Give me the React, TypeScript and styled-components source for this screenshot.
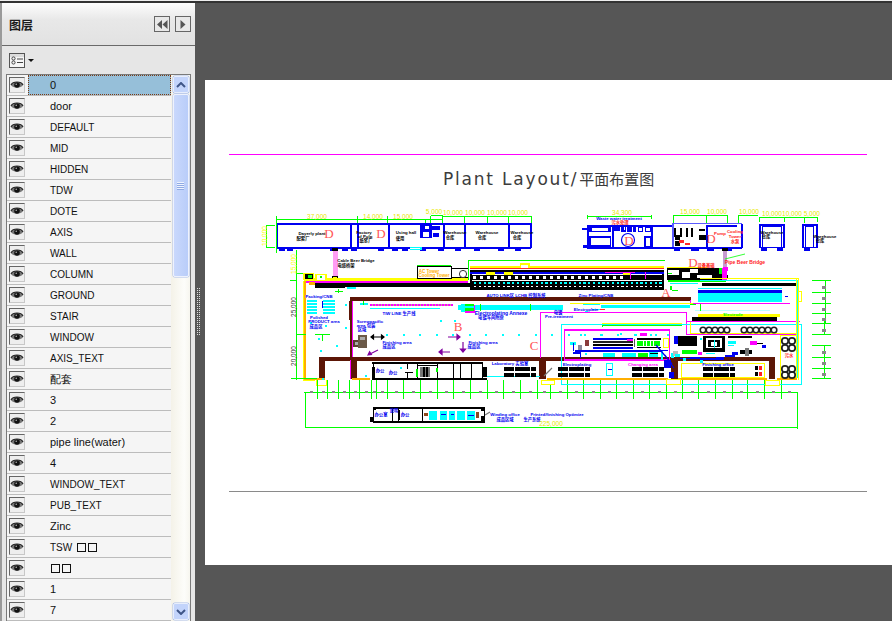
import React from "react";
import styled, { createGlobalStyle } from "styled-components";

const Global = createGlobalStyle`
  html, body { margin: 0; padding: 0; height: 621px; overflow: hidden; background: #565656; }
  #root { height: 621px; }
`;
const Shell = styled.div`
  width: 892px; height: 621px; overflow: hidden; box-sizing: border-box;
  border-top: 1px solid #eee;
  background: #565656; font-family: "Liberation Sans", Tahoma, sans-serif;
`;
const Workspace = styled.div`
  display: flex; height: 620px; box-sizing: border-box; border-top: 2px solid #333;
`;
const Sidebar = styled.aside`
  width: 195px; flex: none; box-sizing: border-box;
  display: flex; flex-direction: column;
  border-left: 2px solid #9a9a9a;
  background: #e6e6e6;
`;
const PanelHeader = styled.header`
  height: 43px; flex: none; display: flex; align-items: center; box-sizing: border-box;
  padding: 0 4px 0 7px; border-bottom: 1px solid #6a6a6a;
  background: linear-gradient(#fdfdfd, #e8e8e8 40%, #e2e2e2);
`;
const PanelTitle = styled.h1`
  margin: 0; flex: 1; font: bold 12px "Noto Sans CJK SC", sans-serif; color: #1c1c1c;
`;
const NavButton = styled.button`
  width: 16px; height: 16px; padding: 0; margin-left: ${p => p.$gap}px;
  display: flex; align-items: center; justify-content: center;
  border: 1px solid #666; background: #e8e8e8;
`;
const OptionsBar = styled.div`
  height: 28px; flex: none; display: flex; align-items: center; gap: 3px; padding-left: 7px;
`;
const OptionsIcon = styled.div`
  width: 16px; height: 15px; box-sizing: border-box; border: 1px solid #555;
  background: linear-gradient(#ddd 0 3px, #f6f6f6 3px); display: flex;
`;
const Caret = styled.span`
  width: 0; height: 0; border: 3px solid transparent; border-top-color: #111; border-bottom: 0;
`;
const ListFrame = styled.div`
  margin: 0 4px; flex: 1; min-height: 0; display: flex; box-sizing: border-box;
  border: 1px solid #7a7a7a; border-bottom: 0; background: #f5f5f5;
`;
const Rows = styled.ul`
  list-style: none; margin: 0; padding: 0; width: 164px; flex: none; overflow: hidden;
`;
const Row = styled.li`
  height: 21px; box-sizing: border-box; display: flex; align-items: stretch;
  border-bottom: 1px solid #bcbcbc; background: #f5f5f5;
`;
const EyeCell = styled.div`
  width: 21px; flex: none; display: flex; align-items: center; padding-left: 2px; box-sizing: border-box;
`;
const EyeBox = styled.div`
  width: 16px; height: 16px; box-sizing: border-box; display: flex; align-items: center; justify-content: center;
  border: 1px solid; border-color: #666 #c8c8c8 #c8c8c8 #666; background: #eee;
`;
const LayerName = styled.div`
  flex: 1; display: flex; align-items: center; padding-left: 22px; color: #111;
  font-size: ${p => (p.$caps ? 10 : 11)}px;
  ${p => p.$selected ? "background: #96bfd9; outline: 1px dotted #7a3b14; outline-offset: -1px;" : ""}
`;
const LayerPrefix = styled.span`
  margin-right: 4px; font-size: 10px;
`;
const Tofu = styled.span`
  display: inline-block; width: 9px; height: 9px; box-sizing: border-box; border: 1px solid #111; margin-left: 1px; margin-right: 1px;
`;
const Scrollbar = styled.div`
  width: 19px; flex: none; display: flex; flex-direction: column; align-items: center;
  background: linear-gradient(90deg, #f4f2e8, #fdfdfa 70%, #f7f6ef);
`;
const ScrollButton = styled.div`
  width: 16px; height: 17px; margin: 1px 0; flex: none; box-sizing: border-box; display: flex; align-items: center; justify-content: center;
  border: 1px solid #e8eefc; border-radius: 2px; background: #c3d4fb; box-shadow: 0 0 0 0.5px #a9bce6;
`;
const Thumb = styled.div`
  width: 16px; height: 183px; flex: none; box-sizing: border-box; display: flex; align-items: center; justify-content: center;
  border: 1px solid #eef2fd; border-radius: 2px; background: linear-gradient(90deg, #c9d8fc, #b9cdf9);
  box-shadow: 0 0 0 0.5px #a9bce6;
`;
const Grip = styled.div`
  width: 7px; height: 8px; background: repeating-linear-gradient(#eef3fe 0 1px, #8fa9e3 1px 2px);
`;
const Track = styled.div`flex: 1;`;
const Gutter = styled.div`
  width: 10px; flex: none; display: flex; align-items: center; padding-left: 2px; box-sizing: border-box;
  padding-bottom: 1px; background: #565656;
`;
const GripDots = styled.div`
  width: 3px; height: 48px;
  background-image: radial-gradient(circle at 0.5px 0.5px, #ddd 0.7px, transparent 0.8px);
  background-size: 2px 2px;
`;
const Canvas = styled.main`
  flex: 1; padding-top: 77px; display: flex; align-items: flex-start;
`;
const Page = styled.section`
  flex: 1; height: 485px; background: #fff; padding-top: 74px; box-sizing: border-box;
  display: flex; flex-direction: column;
`;
const Rule = styled.hr`
  margin: 0 25px 0 24px; border: 0; height: 1px; flex: none; background: ${p => p.$color};
`;
const Title = styled.div`
  height: 50px; padding-left: 238px; display: flex; align-items: center; box-sizing: border-box; padding-bottom: 3px;
  color: #3c3c3c; white-space: nowrap;
`;
const TitleLatin = styled.span`
  font: 17px "DejaVu Sans", sans-serif; letter-spacing: 1.8px; margin-right: 1px;
`;
const TitleCjk = styled.span`
  font: 15px "Noto Sans CJK SC", sans-serif;
`;
const Drawing = styled.svg`
  display: block; margin-left: 55px; width: 600px; height: 232px; flex: none; margin-bottom: 54px;
`;

type R = [number, number, number, number, string];
const BLUE = "#0000f0", GREEN = "#00ff00", YEL = "#ffff00", CY = "#00ffff", MAG = "#ff00ff", BRN = "#5c1606", BLK = "#000", ORG = "#ffae00", RED = "#ff2a2a";

const range = (n: number, f: (i: number) => number) => Array.from({ length: n }, (_, i) => f(i));

const fills: R[] = [
  /* left top building */
  [276,223,255,1.5,BLUE],[276,247,255,1.5,BLUE],[276,223,1.5,25,BLUE],[530,223,1.5,25,BLUE],
  ...[350,357,388,443,464,508].map((x): R => [x,223,1.5,25,BLUE]),
  ...[279,287,330,342,351,378,392,402,420,438,455,474,498,515].map((x): R => [x,248,6,3,BLUE]),
  [420,224,12,14,BLUE],[432,226,8,4,BLUE],[423,232,6,5,"#fff"],[425,226,4,3,"#fff"],[433,233,6,4,BLUE],
  [410,247,12,3,CY],[410,248,10,1,"#fff"],
  /* left top dims */
  [276,219,166,1,GREEN],[442,216,89,1,GREEN],[431,215,11,1,GREEN],[442,215,1,8,GREEN],[425,219,1,4,GREEN],
  ...[276,357,387,430,464,487,508,531].map((x): R => [x,216,1,7,GREEN]),
  [266,225,9,1,GREEN],[266,247,9,1,GREEN],[266,225,1,22,GREEN],[276,223,1,30,GREEN],
  /* bridge left */
  [333,249,5,27,"#ff9cf4"],[332,248,6,3,BLK],[332,276,6,4,BLK],[333,277,4,2,YEL],
  /* right top buildings */
  [587,225,85,1.5,BLUE],[587,247,85,1.5,BLUE],[587,225,2,23,BLUE],[589,226,22,6,BLUE],[589,236,22,11,BLUE],
  [592,228,16,3,"#fff"],[591,238,19,7,"#fff"],[612,226,1.5,22,BLUE],[613,226,7,5,BLUE],
  [621,226,5,6,BLUE],[627,226,5,6,BLUE],[638,226,5,6,BLUE],[645,226,6,6,BLUE],[633,226,3,6,BLUE],
  [624,227,1,3,"#fff"],[639,228,3,3,"#fff"],[646,228,4,3,"#fff"],[644,236,7,11,BLUE],[646,238,4,8,"#fff"],
  [651,225,1.5,23,BLUE],[582,228,5,2,BLUE],[583,245,4,3,BLUE],
  [587,216,65,1,GREEN],[587,215,1,4,GREEN],[651,215,1,4,GREEN],
  [672,223,70,1,"#5a5aff"],[672,223,1.5,26,"#5a5aff"],[706,225,1.5,24,BLUE],[706,225,31,1.5,BLUE],[706,247,36,1.5,BLUE],
  [672,247,34,1.5,BLUE],[674,248,6,3,BLUE],[691,248,8,3,BLUE],[707,248,7,3,BLUE],[726,248,6,3,BLUE],[741,224,1.5,24,BLUE],
  [674,228,2,9,BLK],[680,228,2,9,BLK],[686,228,2,9,BLK],[691,228,2,9,BLK],[675,235,5,5,BLK],[675,241,5,5,BLK],
  [699,229,6,2,BLK],[699,235,7,5,BLK],[679,240,5,3,RED],[685,243,5,2,RED],
  [673,215,54,1,GREEN],[673,215,1,8,GREEN],[706,215,1,8,GREEN],[727,215,1,8,GREEN],[738,215,20,1,GREEN],[738,215,1,8,GREEN],
  [759,217,25,1,GREEN],[784,217,18,1,GREEN],[802,217,15,1,GREEN],[759,217,1,5,GREEN],[784,217,1,5,GREEN],[804,217,1,6,GREEN],[817,217,1,5,GREEN],
  [759,224,25,1.5,BLUE],[759,224,1.5,24,BLUE],[783,224,1.5,24,BLUE],[762,226,20,1,BLUE],[762,226,1,21,BLUE],[781,226,1,21,BLUE],[759,247,25,1,BLUE],
  [761,248,6,3,BLUE],[777,248,6,3,BLUE],
  [802,224,15,1.5,BLUE],[802,224,1.5,24,BLUE],[816,224,1.5,24,BLUE],[805,226,9,1,BLUE],[805,226,1,21,BLUE],[813,226,1,21,BLUE],[802,247,15,1,BLUE],[804,248,6,3,BLUE],
  /* right bridge */
  [723,248,4,29,"#c79ad0"],[722,248,6,3,BLK],[723,267,5,4,MAG],[722,275,6,4,BLK],
  /* top plant strip */
  [304,278,164,3,YEL],[304,281,164,1.5,MAG],[345,282.500,125,4,BLK],[315,283,30,5,BLK],
  [296,273,8,1,GREEN],[303,273,11,7,YEL],[305,274,8,5,BLK],[308,275,4,3,GREEN],[315,274,12,7,YEL],[317,275,8,5,"#fff"],[320,276,2,2,GREEN],
  [309,282,6,3,ORG],[347,287,9,2,CY],[335,291,8,1,GREEN],[338,289,1,4,GREEN],
  [417,265,34,1,GREEN],[417,266,1,13,BLK],[417,266,34,1,BLK],[417,278,34,1,BLK],[451,266,1,13,BLK],[451,268,17,1,BLK],[451,277,17,1,BLK],
  [468,260,197,1,GREEN],[468,260,1,20,GREEN],[470,270,194,2,BLK],[470,288,194,2,BLK],[470,270,2,20,BLK],[662,270,2,20,BLK],
  [470,266,194,1.5,YEL],[470,268,194,1,RED],[470,272,194,1.5,BLUE],[470,275,194,5,BLK],[470,281,194,7,BLK],
  [495,266,15,2,YEL],[520,263,10,5,YEL],[521,265,7,3,"#fff"],[486,272,9,3,YEL],[504,272,9,3,YEL],[623,272,8,3,YEL],
  ...range(40, i => 474 + i*4.75).map((x): R => [x,282,2.4,2,CY]),
  ...range(40, i => 474 + i*4.75).map((x): R => [x,286,2.4,1.4,"#fff"]),
  ...range(22, i => 473 + i*7).map((x): R => [x,276,3,3,"#fff"]),
  [605,272,30,1,MAG],[630,272,1,7,MAG],[645,272,1,7,MAG],
  [667,267,40,1,YEL],[667,268,60,12,BLK],[668,270,11,5,"#fff"],[682,272,8,6,"#fff"],[690,269,8,4,"#fff"],[697,275,15,3,"#fff"],[668,273,4,1,GREEN],
  [668,280,58,2,GREEN],[722,268,5,13,MAG],[719,268,3,6,GREEN],
  [670,283,28,1,CY],[670,286,2,4,GREEN],[672,290,6,1,GREEN],
  /* main building */
  [350,297,341,4,BRN],[349,301,3,19,BRN],[319,357,456,4,BRN],[350,320,3,38,BRN],
  [319,361,6,18,BRN],[351,361,6,18,BRN],[539,361,7,18,BRN],[671,361,7,18,BRN],[769,361,6,18,BRN],
  [350,360,1,19,MAG],[352,301,1,56,MAG],[540,312,146,1,MAG],[540,312,1,46,MAG],[686,312,1,22,MAG],[690,300,1,3,MAG],
  [370,304,83,2,"#c9a0a0"],...range(28, i => 370 + i*3).map((x): R => [x,304,1.5,2,MAG]),
  [360,303,8,2,CY],[363,301,1,4,GREEN],
  [370,308,70,1,CY],[458,305,105,5,CY],[461,304,5,8,CY],[465,304,9,2,GREEN],[465,311,10,2,MAG],[474,305,1,8,MAG],[465,308,9,3,GREEN],[480,304,1,7,GREEN],[530,304,1,7,GREEN],
  [601,305,89,3,CY],[583,303,17,2,CY],[570,303,130,1,YEL],[600,309,5,1,RED],[585,311,3,1,CY],[592,309,8,1,CY],
  [702,283,94,3,BLK],[698,288,84,1,CY],[698,290,84,2.500,BLUE],[698,293,84,9,CY],[698,289,84,1,"#fff"],[785,296,3,1,BLUE],
  [692,317,85,4,BLK],[698,314,82,3,YEL],[695,310,75,1,"#bff"],[693,303,97,1,MAG],[700,304,1,7,GREEN],[690,304,6,1,GREEN],
  [304,281,2,97,ORG],[303,281,1,99,YEL],[304,378,21,2,ORG],[352,378,18,2,ORG],[303,380,12,1,YEL],[316,380,1,5,YEL],[316,385,11,1,YEL],[326,380,1,5,YEL],
  [296,250,1,130,GREEN],[290,280,6,1,GREEN],[296,334,10,1,GREEN],[291,378,26,1,GREEN],
  /* left interior */
  [315,334,15,1,GREEN],[322,334,1,7,GREEN],
  ...[300,303,306,309,312].flatMap((y): R[] => [[307,y,10,2,CY],[323,y,12,2,CY]]),
  [322,301,1,7,BLUE],[353,340,7,7,"#5a4030"],[358,335,9,13,"#6b5a48"],[360,337,5,3,"#aaa"],[355,342,3,3,"#aaa"],
  /* interior block */
  [372,362,110,1.500,BLK],[372,378,115,1.500,BLK],[373,362,1,17,BLK],[372,367,3,12,BLK],[407,362,1,7,BLK],[405,372,8,1,BLK],[407,372,1,7,BLK],[417,365,20,1,BLK],
  [417,363,1,16,BLK],[437,362,1,17,BLK],[453,363,1,16,BLK],[460,363,1,16,BLK],[471,363,1,16,BLK],[482,362,1,17,BLK],[420,367,10,10,"#777"],[423,367,2,10,BLK],[426,367,2,10,BLK],[416,369,2,8,GREEN],[436,368,2,4,GREEN],[482,367,5,10,BLK],
  [487,376,53,1,CY],
  /* bottom mini plant */
  [373,407,112,1.500,BLK],[373,421,112,1.500,BLK],[373,407,1,15,BLK],[484,407,1,15,BLK],[370,417,3,5,BLK],[373,407,3,3,BLK],[481,407,4,4,BLK],[481,416,4,5,BLK],[422,408,1,14,BLK],[392,409,1,12,BLK],[398,409,1,12,BLK],[399,410,1,10,BLK],
  [429,411,8,9,CY],[440,411,7,9,CY],[449,411,6,9,CY],[457,411,8,9,CY],[467,411,8,9,CY],[424,413,4,3,"#8b4a1e"],[476,412,3,6,"#8b4a1e"],
  [441,414,5,1,BLUE],[451,414,3,1,BLUE],[468,415,6,1,BLUE],
  /* bottom dims */
  [304,392,494,1,GREEN],[305,392,1,36,GREEN],[305,427,493,1,GREEN],[797,392,1,37,GREEN],
  ...[317,327,338,349,359,371,376,387,403,420,437,453,470,487,503,520,537,550,567,583,600,616,633,649,666,682,698,715,732,747,764,781].map((x): R => [x,380,1,19,GREEN]),
  ...[310,322,332,343,354,365,373,381,395,412,429,445,462,479,495,512,529,543,559,575,592,608,625,641,658,674,691,707,723,740,756,772,788].map((x): R => [x,391,3,2,"#888"]),
  /* outer cyan right */
  [561,324,241,1,CY],[561,324,1,61,CY],[561,384,241,1,CY],[801,324,1,61,CY],
  [564,329,106,1.500,MAG],[564,329,1,31,MAG],[564,359,106,1.500,MAG],[669,329,1,31,MAG],
  [602,323,80,1,YEL],[602,325,80,1,GREEN],[602,325,1,2,GREEN],[686,321,114,1,MAG],[686,334,110,1,MAG],
  [690,322,1,12,YEL],[690,333,106,1,YEL],[796,279,1,98,YEL],[798,278,1,102,YEL],[700,278,98,1,YEL],[780,335,16,1,YEL],[780,336,1,42,YEL],[780,377,17,1,YEL],
  [700,280,96,1,CY],[797,280,1,98,CY],[798,291,4,11,YEL],[799,292,2,9,"#fff"],
  /* inner machinery */
  [593,338,40,2,BLUE],[593,341,40,2,"#222"],[593,344,40,2,BLK],[593,347,40,2,BLUE],[627,339,6,2,MAG],[634,339,1,8,"#555"],
  ...range(7, i => 637 + i*3.4).map((x): R => [x,341,2.6,5,GREEN]),[637,338,24,2,BLK],[637,347,24,1,BLK],
  [663,338,6,10,YEL],[664,339,4,8,"#fff"],[640,333,7,3,MAG],
  [578,345,4,7,"#889"],[570,342,6,3,CY],[573,343,1,8,BLUE],[575,350,88,2,BLUE],[573,352,8,2,BLUE],[580,352,1,6,BLUE],[603,353,12,4,CY],[622,353,14,4,CY],[638,353,10,4,GREEN],[649,352,9,5,CY],[650,353,8,1,BLK],
  [585,340,4,6,"#8a3b3b"],
  [660,350,8,1,BLUE],[661,351,2,9,CY],[664,360,7,8,BLUE],[669,372,5,6,BLUE],[671,353,3,5,CY],
  [674,336,4,8,BLUE],[678,336,19,10,BLK],[682,350,15,4,GREEN],[673,351,5,5,"#bbb"],[698,352,4,3,MAG],
  [703,336,22,16,BLK],[706,338,16,10,"#fff"],[708,340,12,7,BLK],[711,342,6,4,"#fff"],[714,340,1,8,CY],[706,353,9,1,CY],
  [728,336,24,2,BLK],[728,341,8,3,CY],[728,345,6,1,CY],[750,341,7,4,MAG],[757,343,6,1,BLK],[762,345,4,3,BLUE],[740,350,12,4,BLK],[745,348,4,8,"#777"],[732,352,6,3,BLUE],[725,355,10,2,BLUE],[716,357,8,3,BLUE],[700,358,16,2,BLUE],[690,357,10,2,BLUE],[680,358,12,1,BLUE],
  [675,354,5,3,CY],[683,358,3,3,CY],[700,360,3,3,CY],
  [681,363,84,1,YEL],[681,363,1,15,YEL],[681,377,84,1,YEL],[764,363,1,15,YEL],
  [606,363,7,13,CY],[607,364,5,11,"#fff"],[608,369,4,1,BLUE],
  /* orange rails */
  [547,378,121,2,ORG],[678,378,89,2,ORG],[777,378,20,2,ORG],[541,380,14,5,YEL],[542,381,12,3,"#fff"],[666,379,15,6,YEL],[667,380,13,4,"#fff"],[765,380,15,6,YEL],[766,381,13,4,"#fff"],
  /* right dims */
  ...[280,292,303,313,323,334,345,357,368,378].map((y): R => [812,y,19,1,GREEN]),
  [825,280,1,44,GREEN],[824,320,1,15,GREEN],[824,345,1,34,GREEN],
  ...[286,297,308,318,329,351,362,373].map((y): R => [822,y,4,3,"#888"]),
];

const cyanDots: [number, number][] = [
  ...range(18, i => 386 + i*16.5).map((x): [number, number] => [x, 334]),
  [318,338],[336,345],[320,350],[325,325],[310,322],[345,304],[440,320],[454,320],[345,327],[365,375],[322,378],[400,367],[620,333],[580,334],[600,334],[635,334],[655,334],[585,353],[700,338],
];

const ovals: [number, number, number][] = [
  ...range(5, i => 703 + i*6).map((x): [number, number, number] => [x, 330, 2.8]),
  ...range(6, i => 744 + i*6).map((x): [number, number, number] => [x, 330, 2.8]),
];

const cells = (x0: number, y: number, n: number, step = 6): R[] => range(n, i => x0 + i*step).map((x): R => [x, y, 5, 3.5, BLK]);
const parkBlocks: R[] = [
  ...cells(504,367,6,5.3),...cells(504,373,6,5.3),...cells(558,367,6,5.3),...cells(558,373,6,5.3),
  ...cells(632,367,6,5.3),...cells(632,373,6,5.3),...cells(703,367,6,5.3),...cells(703,373,6,5.3),
  [755,366,3,3.5,BLK],[759,366,3,3.5,"#f22"],[755,372,3,3.5,BLK],[759,372,3,3.5,"#f22"],
];

const arrows: [string, string][] = [
  ["M371 337 h13 M371 337 l2.5-2v4z M384 337 l-2.5-2v4z", BLK],
  ["M448 337 h12 M460 337 l-3-2.5v5z", "#8000a0"],
  ["M378 350 L368 355 M368 355 l3.400 -.5 l-1.800-2.800z", "#8000a0"],
  ["M450 352 h-11 M439 352 l3-2.500v5z", "#8000a0"],
  ["M463 342 v10 M463 352 l-2.500-3h5z", "#8000a0"],
  ["M549 371 l-5 5 M552 368 l-3 3", "#777"],
  ["M490 412 l-5 3", "#777"],
];

const vLabels: [string, number, number, string][] = [
  ["10,000", 267, 236, YEL],["15,000", 296, 264, YEL],["25,000", 296, 307, "#333"],["20,000", 296, 356, "#333"],
];
const dims: [string, number, number][] = [
  ["37,000",317,218.500],["14,000",373,218.500],["15,000",403,218.500],["5,000",434,214],["10,000",453,215],["10,000",475,215],["10,000",497,215],["10,000",518,215],
  ["34,300",622,215],["15,000",690,214],["10,000",717,214],["10,000",749,214],["10,000",772,216],["10,000 5,000",801,216],["225,000",551,426],
];
type T = [string, number, number, string?, number?];
const labels: T[] = [
  ["Dayerly plant",312,235,BLK],["配套厂",303,240,BLK],["Factory",364,234,BLK],["of Pulp",365,238,BLK],["纸浆厂",366,242,BLK],["Using hall",406,234,BLK],["使用",400,240,BLK],
  ["Warehouse",455,234,BLK],["仓库",450,239,BLK],["Warehouse",487,234,BLK],["仓库",482,239,BLK],["Warehouse",522,234,BLK],["仓库",517,239,BLK],
  ["Cable Beer Bridge",356,262,BLK],["电缆桥架",346,267,BLK],["Waste water treatment",619,220,BLUE],["污水处理",620,224,"#f22"],
  ["Warehouse",772,234,BLK],["仓库",766,238,BLK],["Warehouse",825,238,BLK],["仓库",820,242,BLK],["Pipe Beer Bridge",745,264,"#f22",5],["设备基础",706,267,"#f22"],["Cooling",735,233,"#f22"],["Tower",735,238,"#f22"],["水泵",735,243,"#f22"],["Pump",720,235,"#f22"],
  ["AC Tower",429,272.500,ORG,4.5],["Cooling Tower",434,277,ORG,4.5],["AUTO LINK区 LCHB 控制系统",516,297,BLUE],["Packing/CNB",319,298,BLUE],
  ["Polished",319,319,BLUE],["PRODUCT area",324,323,BLUE],["成品区",316,328,BLUE],["TIW LINE 生产线",399,315,BLUE],["Electroplating Annexe",501,315,BLUE,5],["电镀车间附房",491,319,BLUE],
  ["Screwpacific",370,323,BLUE],["area 包装",366,327,BLUE],["区域",362,331,BLUE],["Finishing area",397,344,BLUE],["成品区",389,348,BLUE],["Finishing area",483,344,BLUE],["成品区",474,348,BLUE],
  ["Zinc Plating/CNB",596,297,BLUE],["Electroplate",586,311,BLUE],["电镀",558,314,BLUE],["Pre-treatment",559,318,BLUE],["Electrode",733,316,GREEN],
  ["Laboratory 实验室",510,365,BLUE],["办公",380,372,BLUE],["办公",393,374,BLUE],["Electroplating",577,366,BLUE],["Finishing office",718,366,BLUE],["Changing area",643,366,MAG],
  ["Winding office",505,416,BLUE],["Printed/finishing  Optimize",557,416,BLUE],["成品区域",505,421,BLUE],["生产系统",532,421,BLUE],["办公室",381,416,BLUE],["办公",405,416,BLUE],["说明",394,412,BLUE],
  ["污水",789,357,RED],
];
const letters: T[] = [
  ["D",329,238,"#f55",13],["D",381,238,"#f55",13],["D",629,245,"#f55",13],["D",711,243,"#f55",13],["D",693,267,"#f55",13],
  ["B",458,331,"#f55",13],["C",534,350,"#f55",13],["A",666,297,"#f55",13],
];
const Eye = () => (
  <svg width="14" height="10" viewBox="0 0 14 10">
    <path d="M1 5C3 1.500 11 1.500 13 5C11 8.500 3 8.500 1 5Z" fill="#777" />
    <path d="M1 5C3 1 11 1 13 5" stroke="#222" strokeWidth="1.200" fill="none" />
    <circle cx="7" cy="5" r="2.800" fill="#111" />
    <circle cx="6.200" cy="4.300" r=".7" fill="#ccc" />
  </svg>
);

const CadDrawing = () => (
  <Drawing viewBox="260 205 600 232" shapeRendering="crispEdges">
    {fills.concat(parkBlocks).map(([x, y, w, h, c], i) => (
      <rect key={i} x={x} y={y} width={w} height={h} fill={c} />
    ))}
    {cyanDots.map(([x, y], i) => <rect key={i} x={x} y={y} width="2" height="2" fill={CY} />)}
    <g shapeRendering="auto">
      <circle cx="463" cy="274" r="3.600" fill="#fff" stroke="#333" />
      <circle cx="628" cy="240" r="6.500" fill="#fff" stroke={BLUE} strokeWidth="1.200" />
      {[[785,341],[792,341],[785,348],[792,348],[785,369],[792,369],[785,375],[792,375]].map(([x, y], i) => (
        <circle key={i} cx={x} cy={y} r="3.200" fill="none" stroke="#222" strokeWidth="1.700" />
      ))}
      {ovals.map(([x, y, r], i) => <circle key={i} cx={x} cy={y} r={r} fill="none" stroke="#222" strokeWidth="1.600" />)}
      {arrows.map(([d, c], i) => <path key={i} d={d} stroke={c} strokeWidth="1.200" fill={c} />)}
      <path d="M656 345 L672 364 M665 355 L674 368" stroke={BLUE} strokeWidth="1.200" fill="none" />
      <path d="M725 259 L745 254" stroke={GREEN} strokeWidth=".8" fill="none" />
      <g fontFamily='"Liberation Sans","Noto Sans CJK SC",sans-serif' fontWeight="bold" textAnchor="middle" style={{ fontSize: 4.3 }}>
        {labels.map(([t, x, y, c, s], i) => <text key={i} x={x} y={y} fill={c} style={s ? { fontSize: s } : undefined}>{t}</text>)}
      </g>
      <g fontFamily='"Liberation Sans",sans-serif' textAnchor="middle" style={{ fontSize: 6.5 }}>
        {dims.map(([t, x, y], i) => <text key={i} x={x} y={y} fill="#e8e800">{t}</text>)}
        {vLabels.map(([t, x, y, c], i) => <text key={i} transform={`translate(${x} ${y}) rotate(-90)`} fill={c}>{t}</text>)}
      </g>
      <g fontFamily='"Liberation Serif",serif' textAnchor="middle">
        {letters.map(([t, x, y, c, s], i) => <text key={i} x={x} y={y} fill={c} style={{ fontSize: s }}>{t}</text>)}
      </g>
    </g>
  </Drawing>
);

const layers: (string | { t: string; n: number })[] = [
  "0","door","DEFAULT","MID","HIDDEN","TDW","DOTE","AXIS","WALL","COLUMN","GROUND","STAIR","WINDOW","AXIS_TEXT","配套","3","2","pipe line(water)","4","WINDOW_TEXT","PUB_TEXT","Zinc",
  { t: "TSW", n: 2 }, { t: "", n: 2 }, "1", "7",
];
const isCaps = (s: string) => /^[A-Z_]+$/.test(s);

export default function App() {
  return (
    <Shell>
      <Global />
      <Workspace>
        <Sidebar>
          <PanelHeader>
            <PanelTitle>图层</PanelTitle>
            <NavButton $gap={0} aria-label="collapse">
              <svg width="11" height="9" viewBox="0 0 11 9"><path d="M5 0v9L0 4.500zM10.500 0v9L5.500 4.500z" fill="#555" /></svg>
            </NavButton>
            <NavButton $gap={5} aria-label="expand">
              <svg width="6" height="9" viewBox="0 0 6 9"><path d="M0.500 0v9L5.500 4.500z" fill="#555" /></svg>
            </NavButton>
          </PanelHeader>
          <OptionsBar>
            <OptionsIcon>
              <svg width="14" height="13" viewBox="0 0 14 13">
                <circle cx="3.500" cy="4.500" r="1.600" stroke="#444" fill="none" />
                <circle cx="3.500" cy="8.500" r="1.600" stroke="#444" fill="none" />
                <path d="M7 5h6M7 8.500h6" stroke="#444" fill="none" />
              </svg>
            </OptionsIcon>
            <Caret />
          </OptionsBar>
          <ListFrame>
            <Rows>
              {layers.map((l, i) => (
                <Row key={i}>
                  <EyeCell><EyeBox><Eye /></EyeBox></EyeCell>
                  <LayerName $selected={i === 0} $caps={typeof l === "string" && isCaps(l)}>
                    {typeof l === "string" ? l : <>{l.t && <LayerPrefix>{l.t}</LayerPrefix>}<Tofu /><Tofu /></>}
                  </LayerName>
                </Row>
              ))}
            </Rows>
            <Scrollbar>
              <ScrollButton>
                <svg width="10" height="6" viewBox="0 0 10 6"><path d="M1 5l4-4 4 4" stroke="#3f5688" strokeWidth="2" fill="none" /></svg>
              </ScrollButton>
              <Thumb><Grip /></Thumb>
              <Track />
              <ScrollButton>
                <svg width="10" height="6" viewBox="0 0 10 6"><path d="M1 1l4 4 4-4" stroke="#3f5688" strokeWidth="2" fill="none" /></svg>
              </ScrollButton>
            </Scrollbar>
          </ListFrame>
        </Sidebar>
        <Gutter><GripDots /></Gutter>
        <Canvas>
          <Page>
            <Rule $color="#ff00ff" />
            <Title><TitleLatin>Plant Layout/</TitleLatin><TitleCjk>平面布置图</TitleCjk></Title>
            <CadDrawing />
            <Rule $color="#8a8a8a" />
          </Page>
        </Canvas>
      </Workspace>
    </Shell>
  );
}
